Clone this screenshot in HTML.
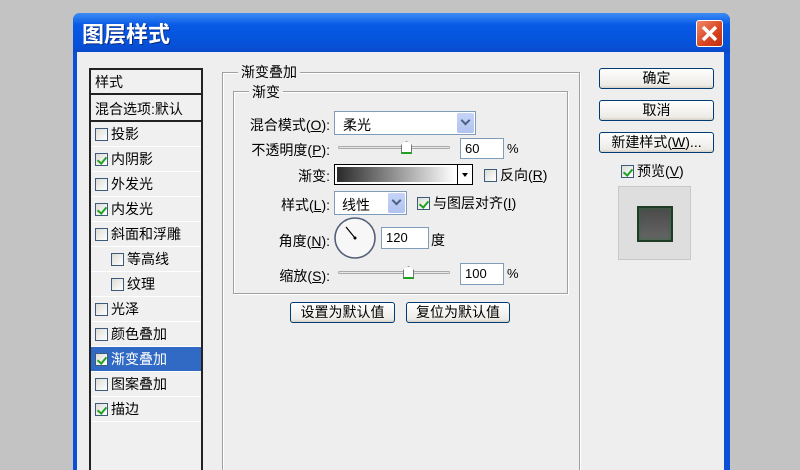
<!DOCTYPE html><html><head><meta charset="utf-8"><style>
*{box-sizing:border-box;margin:0;padding:0}
html,body{width:800px;height:470px;overflow:hidden}
body{background:#c3c3c3;position:relative;font-family:"Liberation Sans","Noto Sans CJK SC",sans-serif;font-size:13px;color:#000}
.a{position:absolute}
.win{left:73px;top:13px;width:657px;height:457px;background:#0a4fd8;border-radius:7px 7px 0 0}
.title{left:73px;top:13px;width:657px;height:40px;border-radius:7px 7px 0 0;background:linear-gradient(#3d8cf5,#0859e6 30%,#0652d8 80%,#0a48c8)}
.body{left:77px;top:52px;width:647px;height:418px;background:#eeeeee}
.close{left:696px;top:20px;width:27px;height:27px;border:1px solid #fff;border-radius:3px;background:linear-gradient(135deg,#f08a6a,#d8431e 60%,#c0300f)}
.list{left:89px;top:68px;width:114px;height:410px;border:2px solid #222;background:#f0f0f0}
.it{position:absolute;left:0;width:110px;height:25px;border-bottom:1px solid #fff;line-height:24px;font-size:14px}
.cb{display:inline-block;width:13px;height:13px;border:1px solid #3d5a7a;background:linear-gradient(135deg,#dcdcd6,#fff);vertical-align:-2px;margin-right:3px;position:relative}
.cb.on:after{content:"";position:absolute;left:3px;top:1px;width:4px;height:7px;border:solid #21a121;border-width:0 2px 2px 0;transform:rotate(40deg)}
.grp{border:1px solid #a0a0a0;box-shadow:1px 1px 0 #fff inset,1px 1px 0 #fff}
.lg{background:#eeeeee;padding:0 3px;font-size:14px}
.lbl{text-align:right;width:120px;font-size:14px}
.inp{background:#fff;border:1px solid #7f9db9;font-size:13px;padding-left:4px;line-height:19px}
.sel{background:#fff;border:1px solid #7f9db9}
.dd{position:absolute;right:1px;top:1px;bottom:1px;width:17px;background:linear-gradient(#c6d3f7,#b0c4f0);border-radius:2px}
.dd:after{content:"";position:absolute;left:5px;top:4px;width:5px;height:5px;border:solid #4d6185;border-width:0 2px 2px 0;transform:rotate(45deg)}
.btn{border:1px solid #003c74;border-radius:3px;background:linear-gradient(#fff,#ecebe6 85%,#d6d0c5);text-align:center;font-size:14px;line-height:18px}
.track{height:3px;border:1px solid #aaa;border-radius:2px;background:#e8e8e8}
.thumb{width:11px;height:13px;background:#fff;border:1px solid #777;border-bottom:2px solid #21a121;clip-path:polygon(0 30%,50% 0,100% 30%,100% 100%,0 100%)}
u{text-decoration:underline}
</style></head><body>
<div class="a win"></div>
<div class="a title"></div>
<div class="a" style="left:82px;top:17px;color:#fff;font-size:22px;font-weight:bold;text-shadow:1px 1px #0a2a80">图层样式</div>
<div class="a close"><svg width="25" height="25"><path d="M6 6L19 19M19 6L6 19" stroke="#fff" stroke-width="3.5"/></svg></div>
<div class="a body"></div>
<div class="a list">
<div class="it" style="top:0;padding-left:4px;border-bottom:2px solid #222">样式</div>
<div class="it" style="top:27px;padding-left:4px;border-bottom:2px solid #222">混合选项:默认</div>
<div class="it" style="top:52px;padding-left:4px"><span class="cb"></span>投影</div>
<div class="it" style="top:77px;padding-left:4px"><span class="cb on"></span>内阴影</div>
<div class="it" style="top:102px;padding-left:4px"><span class="cb"></span>外发光</div>
<div class="it" style="top:127px;padding-left:4px"><span class="cb on"></span>内发光</div>
<div class="it" style="top:152px;padding-left:4px"><span class="cb"></span>斜面和浮雕</div>
<div class="it" style="top:177px;padding-left:20px"><span class="cb"></span>等高线</div>
<div class="it" style="top:202px;padding-left:20px"><span class="cb"></span>纹理</div>
<div class="it" style="top:227px;padding-left:4px"><span class="cb"></span>光泽</div>
<div class="it" style="top:252px;padding-left:4px"><span class="cb"></span>颜色叠加</div>
<div class="it" style="top:277px;padding-left:4px;background:#316ac5;color:#fff"><span class="cb on"></span>渐变叠加</div>
<div class="it" style="top:302px;padding-left:4px"><span class="cb"></span>图案叠加</div>
<div class="it" style="top:327px;padding-left:4px"><span class="cb on"></span>描边</div>
</div>
<div class="a grp" style="left:222px;top:72px;width:358px;height:410px"></div>
<div class="a lg" style="left:238px;top:62px">渐变叠加</div>
<div class="a grp" style="left:233px;top:91px;width:335px;height:203px"></div>
<div class="a lg" style="left:249px;top:82px">渐变</div>
<div class="a lbl" style="left:210px;top:115px">混合模式(<u>O</u>):</div>
<div class="a sel" style="left:334px;top:111px;width:142px;height:24px"><span class="a" style="left:8px;top:3px;font-size:14px">柔光</span><div class="dd"></div></div>
<div class="a lbl" style="left:210px;top:140px">不透明度(<u>P</u>):</div>
<div class="a track" style="left:338px;top:146px;width:112px"></div>
<div class="a thumb" style="left:401px;top:141px"></div>
<div class="a inp" style="left:460px;top:138px;width:44px;height:21px">60</div>
<div class="a" style="left:507px;top:141px">%</div>
<div class="a lbl" style="left:210px;top:166px">渐变:</div>
<div class="a" style="left:334px;top:164px;width:139px;height:21px;border:1px solid #000;background:#fff"><div class="a" style="left:2px;top:2px;width:118px;height:15px;background:linear-gradient(90deg,#2a2a2a,#fff)"></div><div class="a" style="left:122px;top:0;width:1px;height:19px;background:#000"></div><div class="a" style="left:127px;top:8px;border:3px solid transparent;border-top:4px solid #000"></div></div>
<div class="a" style="left:484px;top:165px;font-size:14px"><span class="cb"></span>反向(<u>R</u>)</div>
<div class="a lbl" style="left:210px;top:195px">样式(<u>L</u>):</div>
<div class="a sel" style="left:334px;top:191px;width:73px;height:24px"><span class="a" style="left:7px;top:3px;font-size:14px">线性</span><div class="dd"></div></div>
<div class="a" style="left:417px;top:193px;font-size:14px"><span class="cb on"></span>与图层对齐(<u>I</u>)</div>
<div class="a lbl" style="left:210px;top:231px">角度(<u>N</u>):</div>
<svg class="a" style="left:333px;top:217px" width="44" height="44"><circle cx="22" cy="21" r="20" fill="#f7f7f7" stroke="#54607a" stroke-width="1.6"/><path d="M22 21L13 10" stroke="#000" stroke-width="1.2"/><circle cx="22" cy="21" r="1.5"/></svg>
<div class="a inp" style="left:381px;top:227px;width:48px;height:22px">120</div>
<div class="a" style="left:431px;top:230px;font-size:14px">度</div>
<div class="a lbl" style="left:210px;top:266px">缩放(<u>S</u>):</div>
<div class="a track" style="left:338px;top:271px;width:112px"></div>
<div class="a thumb" style="left:403px;top:266px"></div>
<div class="a inp" style="left:460px;top:263px;width:44px;height:22px">100</div>
<div class="a" style="left:507px;top:266px">%</div>
<div class="a btn" style="left:290px;top:302px;width:105px;height:21px">设置为默认值</div>
<div class="a btn" style="left:406px;top:302px;width:104px;height:21px">复位为默认值</div>
<div class="a btn" style="left:599px;top:68px;width:115px;height:21px">确定</div>
<div class="a btn" style="left:599px;top:100px;width:115px;height:21px">取消</div>
<div class="a btn" style="left:599px;top:132px;width:115px;height:21px">新建样式(<u>W</u>)...</div>
<div class="a" style="left:621px;top:161px;font-size:14px"><span class="cb on"></span>预览(<u>V</u>)</div>
<div class="a" style="left:618px;top:186px;width:73px;height:74px;background:#dedede;border:1px solid #c8c8c8"></div>
<div class="a" style="left:637px;top:206px;width:36px;height:36px;background:linear-gradient(#4a4a4a,#666);border:2px solid #1d3d25;box-shadow:inset 0 0 3px #2f6e3d"></div>
</body></html>
